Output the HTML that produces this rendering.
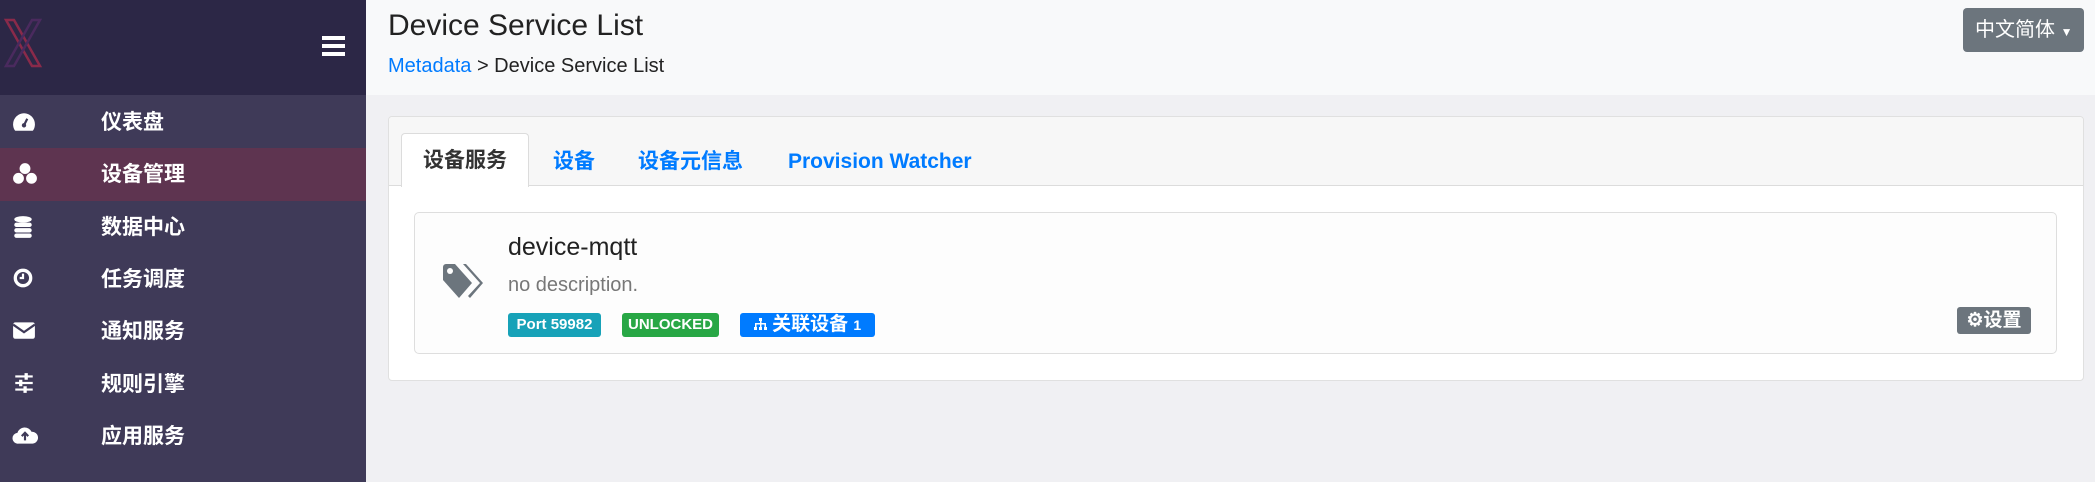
<!DOCTYPE html>
<html><head><meta charset="utf-8"><style>
*{box-sizing:border-box;margin:0;padding:0}
body{width:2095px;height:482px;overflow:hidden;background:#f0f0f3;font-family:"Liberation Sans","Noto Sans CJK SC",sans-serif;position:relative}
.side{position:absolute;left:0;top:0;width:366px;height:482px;background:#3f3a58}
.sh{position:absolute;left:0;top:0;width:366px;height:95px;background:#2c2746}
.item{position:absolute;left:0;width:366px;height:53px;color:#fff;font-weight:bold;font-size:21px;line-height:53px}
.item span{position:absolute;left:101px}
.item svg{position:absolute;left:12px;top:14px}
.act{background:#5e3450}
.hdr{position:absolute;left:366px;top:0;width:1729px;height:95px;background:#f8f9fa}
.title{position:absolute;left:388px;top:9px;font-size:30px;color:#222}
.bc{position:absolute;left:388px;top:55px;font-size:20px;color:#222}
.bc a{color:#007bff}
.lang{position:absolute;left:1963px;top:8px;width:121px;height:44px;background:#6c757d;border-radius:4px;color:#fff;font-size:20px;line-height:44px;padding-left:12px}
.card{position:absolute;left:388px;top:116px;width:1696px;height:265px;background:#fff;border:1px solid #e0e0e0;border-radius:4px;overflow:hidden}
.ch{position:absolute;left:0;top:0;width:100%;height:69px;background:#f7f7f7;border-bottom:1px solid #dcdcdc}
.tab{position:absolute;top:26px;font-size:21px;font-weight:bold;color:#007bff;line-height:38px}
.tact{position:absolute;left:12px;top:16px;width:128px;height:54px;background:#fff;border:1px solid #dcdcdc;border-bottom:none;border-radius:4px 4px 0 0;color:#333;font-size:21px;font-weight:bold;text-align:center;line-height:54px}
.inner{position:absolute;left:414px;top:212px;width:1643px;height:142px;background:#fdfdfd;border:1px solid #dedede;border-radius:5px}
.badge{position:absolute;top:313px;height:24px;border-radius:3px;color:#fff;font-weight:bold;font-size:15px;line-height:24px;text-align:center}
</style></head><body>
<div class="side">
<div class="sh">
<svg style="position:absolute;left:3px;top:18px" width="40" height="50" viewBox="0 0 40 50"><g fill="none" stroke-width="2.5"><path d="M3 2h8l26 46h-8z" stroke="#8a2a4a"/><path d="M37 2h-8L3 48h8z" stroke="#4a2a5e"/></g></svg>
<div style="position:absolute;left:322px;top:36px;width:23px;height:4px;background:#fff;box-shadow:0 8px 0 #fff,0 16px 0 #fff"></div>
</div>
<div class="item" style="top:96px"><svg width="24" height="24" viewBox="0 0 22 20"><path d="M11 2a10 10 0 0 0-10 10c0 3 1 5 2 6h16c1-1 2-3 2-6A10 10 0 0 0 11 2z" fill="#fff"/><circle cx="11" cy="13" r="2" fill="#3f3a58"/><path d="M11 13l3-6" stroke="#3f3a58" stroke-width="2"/></svg><span>仪表盘</span></div>
<div class="item act" style="top:148px"><svg width="26" height="24" viewBox="0 0 24 22"><g fill="#fff"><circle cx="12" cy="6" r="5"/><circle cx="6" cy="15" r="5"/><circle cx="18" cy="15" r="5"/></g></svg><span>设备管理</span></div>
<div class="item" style="top:201px"><svg width="22" height="24" viewBox="0 0 20 22"><g fill="#fff"><ellipse cx="10" cy="4" rx="8" ry="3"/><rect x="2" y="7" width="16" height="4" rx="2"/><rect x="2" y="12" width="16" height="4" rx="2"/><rect x="2" y="17" width="16" height="4" rx="2"/></g></svg><span>数据中心</span></div>
<div class="item" style="top:253px"><svg width="22" height="22" viewBox="0 0 20 20"><circle cx="10" cy="10" r="7" fill="none" stroke="#fff" stroke-width="3"/><path d="M10 6v4h-3" stroke="#fff" stroke-width="2" fill="none"/></svg><span>任务调度</span></div>
<div class="item" style="top:305px"><svg width="24" height="22" viewBox="0 0 22 20"><rect x="1" y="3" width="20" height="15" rx="2" fill="#fff"/><path d="M1 5l10 7 10-7" stroke="#3f3a58" stroke-width="2" fill="none"/></svg><span>通知服务</span></div>
<div class="item" style="top:358px"><svg width="24" height="22" viewBox="0 0 22 20"><g stroke="#fff" stroke-width="2"><path d="M3 4h16M3 10h16M3 16h16"/><path d="M13 1v6M8 7v6M12 13v6" stroke-width="3"/></g></svg><span>规则引擎</span></div>
<div class="item" style="top:410px"><svg width="26" height="22" viewBox="0 0 24 20"><path d="M6 18a5 5 0 0 1-1-10 7 7 0 0 1 13-1 5 5 0 0 1 1 11z" fill="#fff"/><path d="M12 15V9M9 11l3-3 3 3" stroke="#3f3a58" stroke-width="2" fill="none"/></svg><span>应用服务</span></div>
</div>
<div class="hdr"></div>
<div class="title">Device Service List</div>
<div class="bc"><a>Metadata</a> &gt; Device Service List</div>
<div class="lang">中文简体 <span style="font-size:12px">▼</span></div>
<div class="card"><div class="ch"></div>
<div class="tact">设备服务</div>
<div class="tab" style="left:164px">设备</div>
<div class="tab" style="left:249px">设备元信息</div>
<div class="tab" style="left:399px">Provision Watcher</div>
</div>
<div class="inner"></div>
<svg style="position:absolute;left:441px;top:263px" width="44" height="40" viewBox="0 0 44 40"><path d="M2 4a3 3 0 0 1 3-3h9l17 19-13 15L2 17z" fill="#6c757d"/><circle cx="9" cy="8" r="3" fill="#fdfdfd"/><path d="M22 1h3l17 19-13 15-2-2 12-13z" fill="#6c757d"/></svg>
<div style="position:absolute;left:508px;top:233px;font-size:25px;color:#222">device-mqtt</div>
<div style="position:absolute;left:508px;top:274px;font-size:20px;color:#777">no description.</div>
<div class="badge" style="left:508px;width:93px;background:#17a2b8">Port 59982</div>
<div class="badge" style="left:622px;width:97px;background:#28a745">UNLOCKED</div>
<div class="badge" style="left:740px;width:135px;background:#007bff;font-size:19px"><svg width="13" height="13" viewBox="0 0 13 13" style="vertical-align:-1px"><g fill="#fff"><rect x="5" y="0" width="3" height="3"/><rect x="0" y="9" width="3" height="3"/><rect x="5" y="9" width="3" height="3"/><rect x="10" y="9" width="3" height="3"/><rect x="1" y="5" width="11" height="1.5"/><rect x="6" y="3" width="1.5" height="6"/><rect x="1" y="5" width="1.5" height="4"/><rect x="10.5" y="5" width="1.5" height="4"/></g></svg> 关联设备 <span style="font-size:14px">1</span></div>
<div class="badge" style="left:1957px;top:307px;height:27px;width:74px;background:#6c757d;font-size:19px;line-height:27px">⚙设置</div>
</body></html>
